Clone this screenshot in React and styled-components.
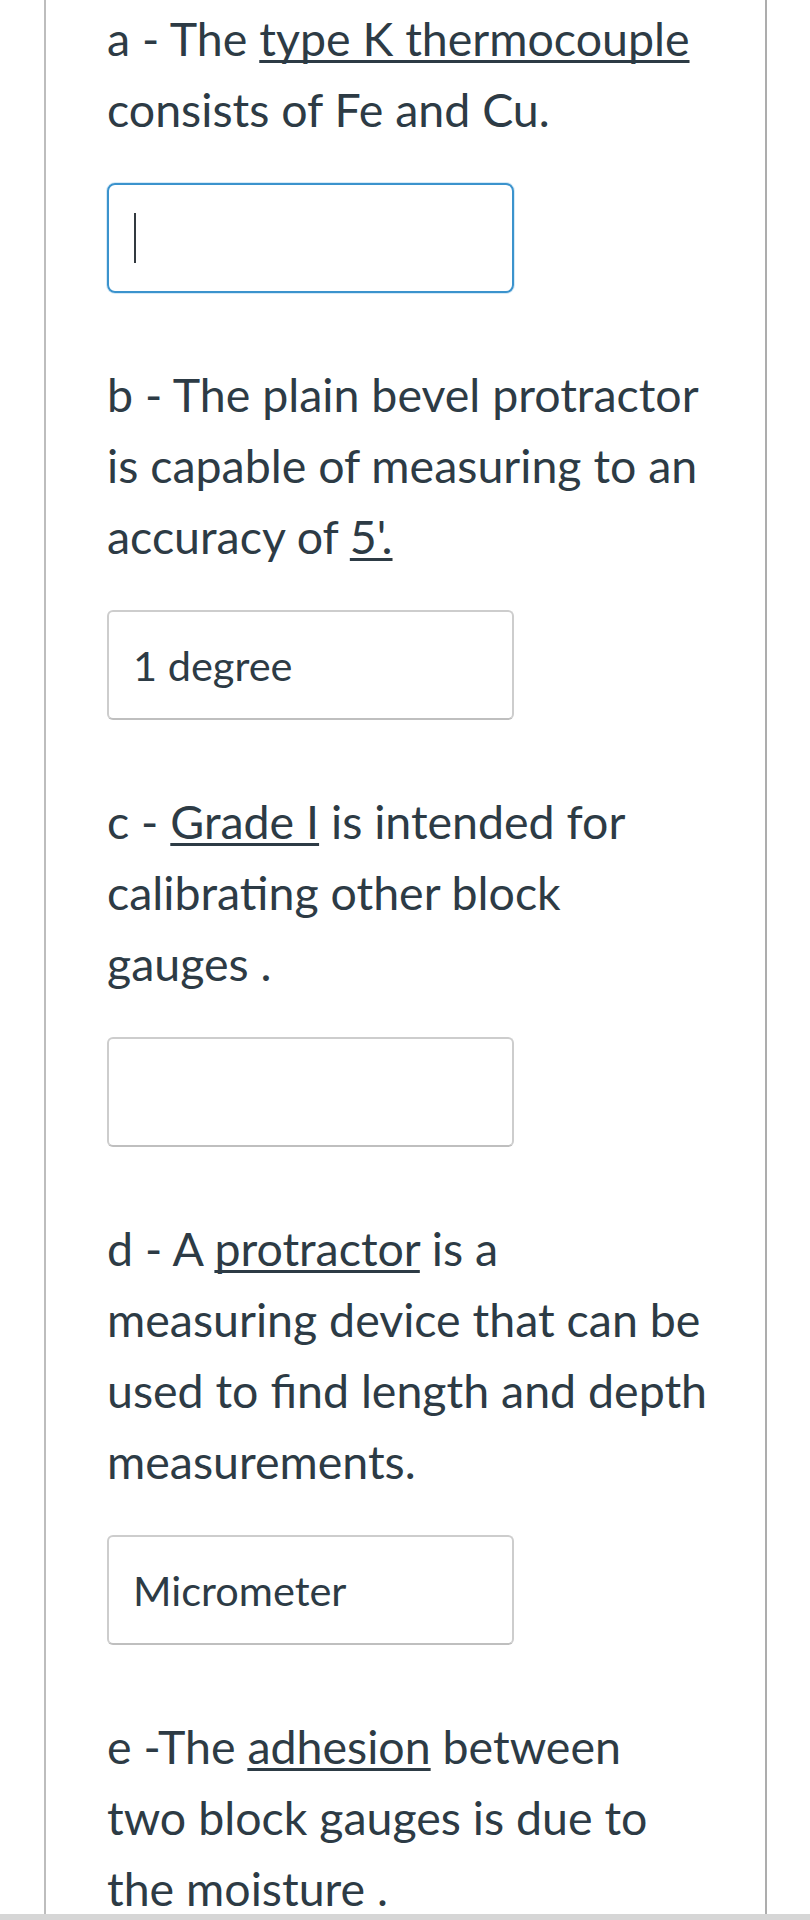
import React from 'react';
import styled, { createGlobalStyle, css } from 'styled-components';

const GlobalStyle = createGlobalStyle`
  body {
    margin: 0;
    background: #ffffff;
    font-family: Lato, 'Open Sans', sans-serif;
  }
`;

const questions = [
  {
    id: 'a',
    lines: [
      ['a - The ', { blank: 'type K thermocouple' }],
      ['consists of Fe and Cu.'],
    ],
    answer: '',
    focused: true,
  },
  {
    id: 'b',
    lines: [
      ['b - The plain bevel protractor'],
      ['is capable of measuring to an'],
      ['accuracy of ', { blank: "5'." }],
    ],
    answer: '1 degree',
  },
  {
    id: 'c',
    lines: [
      ['c - ', { blank: 'Grade I' }, ' is intended for'],
      ['calibrating other block'],
      ['gauges .'],
    ],
    answer: '',
  },
  {
    id: 'd',
    lines: [
      ['d - A ', { blank: 'protractor' }, ' is a'],
      ['measuring device that can be'],
      ['used to find length and depth'],
      ['measurements.'],
    ],
    answer: 'Micrometer',
  },
  {
    id: 'e',
    lines: [
      ['e -The ', { blank: 'adhesion' }, ' between'],
      ['two block gauges is due to'],
      ['the moisture .'],
    ],
    answer: null,
  },
];

const Question = ({ lines, answer, focused }) => (
  <QuestionBlock>
    <Prompt>
      {lines.map((parts, i) => (
        <Line key={i}>
          {parts.map((part, j) =>
            typeof part === 'string' ? (
              <React.Fragment key={j}>{part}</React.Fragment>
            ) : (
              <Blank key={j}>{part.blank}</Blank>
            )
          )}
        </Line>
      ))}
    </Prompt>
    {answer !== null && (
      <AnswerBox $focused={focused}>
        {focused ? <Caret /> : answer}
      </AnswerBox>
    )}
  </QuestionBlock>
);

const App = () => (
  <>
    <GlobalStyle />
    <Screen>
      <Sheet>
        {questions.map((q) => (
          <Question key={q.id} {...q} />
        ))}
      </Sheet>
      <BottomBar />
    </Screen>
  </>
);

const Screen = styled.div`
  display: flex;
  flex-direction: column;
  height: 1920px;
  overflow: hidden;
`;

const Sheet = styled.main`
  flex: 1;
  min-height: 0;
  margin: 0 43px 0 44px;
  padding: 3px 0 0 61px;
  border-left: 2px solid #bdbdbd;
  border-right: 2px solid #adadad;
  display: flex;
  flex-direction: column;
  gap: 66px;
`;

const QuestionBlock = styled.section`
  display: flex;
  flex-direction: column;
  gap: 38px;
`;

const Prompt = styled.p`
  margin: 0;
  color: #2d3b45;
  font-size: 46.5px;
  line-height: 71px;
`;

const Line = styled.span`
  display: block;
  white-space: nowrap;
`;

const Blank = styled.span`
  text-decoration: underline;
  text-decoration-thickness: 3px;
  text-underline-offset: 4px;
  text-decoration-skip-ink: none;
`;

const AnswerBox = styled.div`
  box-sizing: border-box;
  width: 407px;
  height: 110px;
  flex-shrink: 0;
  display: flex;
  align-items: center;
  padding: 0 24px;
  border: 2px solid #cdcdcd;
  border-bottom-color: #bfbfbf;
  border-radius: 6px;
  color: #2d3b45;
  font-size: 41.5px;
  ${({ $focused }) =>
    $focused &&
    css`
      border: 2px solid #3b93cd;
      border-radius: 8px;
      box-shadow: 0 0 0 1px #d6eaf7;
    `}
`;

const Caret = styled.span`
  display: block;
  width: 2px;
  height: 50px;
  background: #333a40;
  margin-left: 1px;
`;

const BottomBar = styled.div`
  position: relative;
  height: 6px;
  flex-shrink: 0;
  background: #d6d6d6;
`;

export default App;
